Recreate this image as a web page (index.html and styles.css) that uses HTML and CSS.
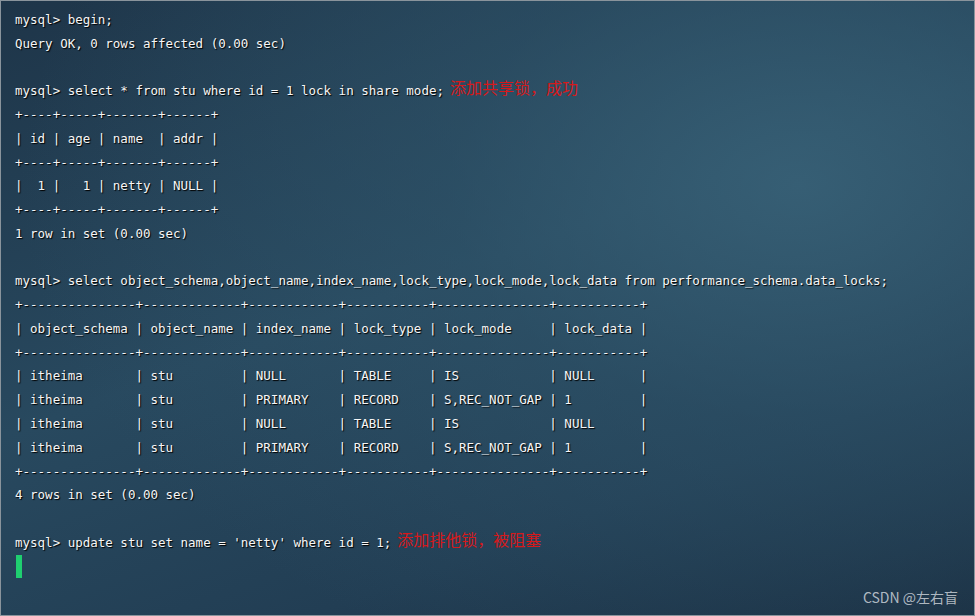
FILE: index.html
```html
<!DOCTYPE html>
<html>
<head>
    <title>mysql</title>
    <link rel="stylesheet" href="styles.css">
</head>
<body>
    <div class="terminal">
<pre class="console">mysql&gt; begin;
Query OK, 0 rows affected (0.00 sec)

mysql&gt; select * from stu where id = 1 lock in share mode;<span class="note">添加共享锁，成功</span>
+----+-----+-------+------+
| id | age | name  | addr |
+----+-----+-------+------+
|  1 |   1 | netty | NULL |
+----+-----+-------+------+
1 row in set (0.00 sec)

mysql&gt; select object_schema,object_name,index_name,lock_type,lock_mode,lock_data from performance_schema.data_locks;
+---------------+-------------+------------+-----------+---------------+-----------+
| object_schema | object_name | index_name | lock_type | lock_mode     | lock_data |
+---------------+-------------+------------+-----------+---------------+-----------+
| itheima       | stu         | NULL       | TABLE     | IS            | NULL      |
| itheima       | stu         | PRIMARY    | RECORD    | S,REC_NOT_GAP | 1         |
| itheima       | stu         | NULL       | TABLE     | IS            | NULL      |
| itheima       | stu         | PRIMARY    | RECORD    | S,REC_NOT_GAP | 1         |
+---------------+-------------+------------+-----------+---------------+-----------+
4 rows in set (0.00 sec)

mysql&gt; update stu set name = 'netty' where id = 1;<span class="note">添加排他锁，被阻塞</span>
<span class="cursor"></span></pre>
        <div class="watermark">CSDN @左右盲</div>
    </div>
</body>
</html>
```

FILE: styles.css
```css
html, body {
    margin: 0;
    padding: 0;
}
body {
    width: 975px;
    height: 616px;
    overflow: hidden;
}
.terminal {
    position: relative;
    box-sizing: border-box;
    width: 975px;
    height: 616px;
    border: 1px solid #8a949c;
    background:
        radial-gradient(ellipse 80% 85% at 82% 30%, rgba(58, 100, 122, 0.8) 0%, rgba(48, 86, 108, 0.5) 45%, rgba(30, 55, 75, 0) 100%),
        linear-gradient(160deg, #1e3549 0%, #28495f 45%, #223e54 75%, #1a2e41 100%);
    padding: 7px 14px 0;
}
.console {
    margin: 0;
    font-family: "DejaVu Sans Mono", "Liberation Mono", monospace;
    font-size: 12.5px;
    line-height: 23.77px;
    color: #f6f6f6;
    text-shadow: 1px 1px 1px #000;
    white-space: pre;
}
.note {
    margin-left: 6px;
    position: relative;
    top: -1px;
    font-family: "Noto Sans CJK SC", sans-serif;
    font-size: 16px;
    line-height: 14px;
    color: #d6191b;
    text-shadow: none;
}
.cursor {
    display: inline-block;
    width: 6px;
    height: 23px;
    margin-left: 1px;
    vertical-align: top;
    background: #1fcf70;
}
.watermark {
    position: absolute;
    right: 16px;
    bottom: 8px;
    font-family: "Noto Sans CJK SC", "Liberation Sans", sans-serif;
    font-size: 14px;
    color: rgba(215, 220, 225, 0.8);
}
```
